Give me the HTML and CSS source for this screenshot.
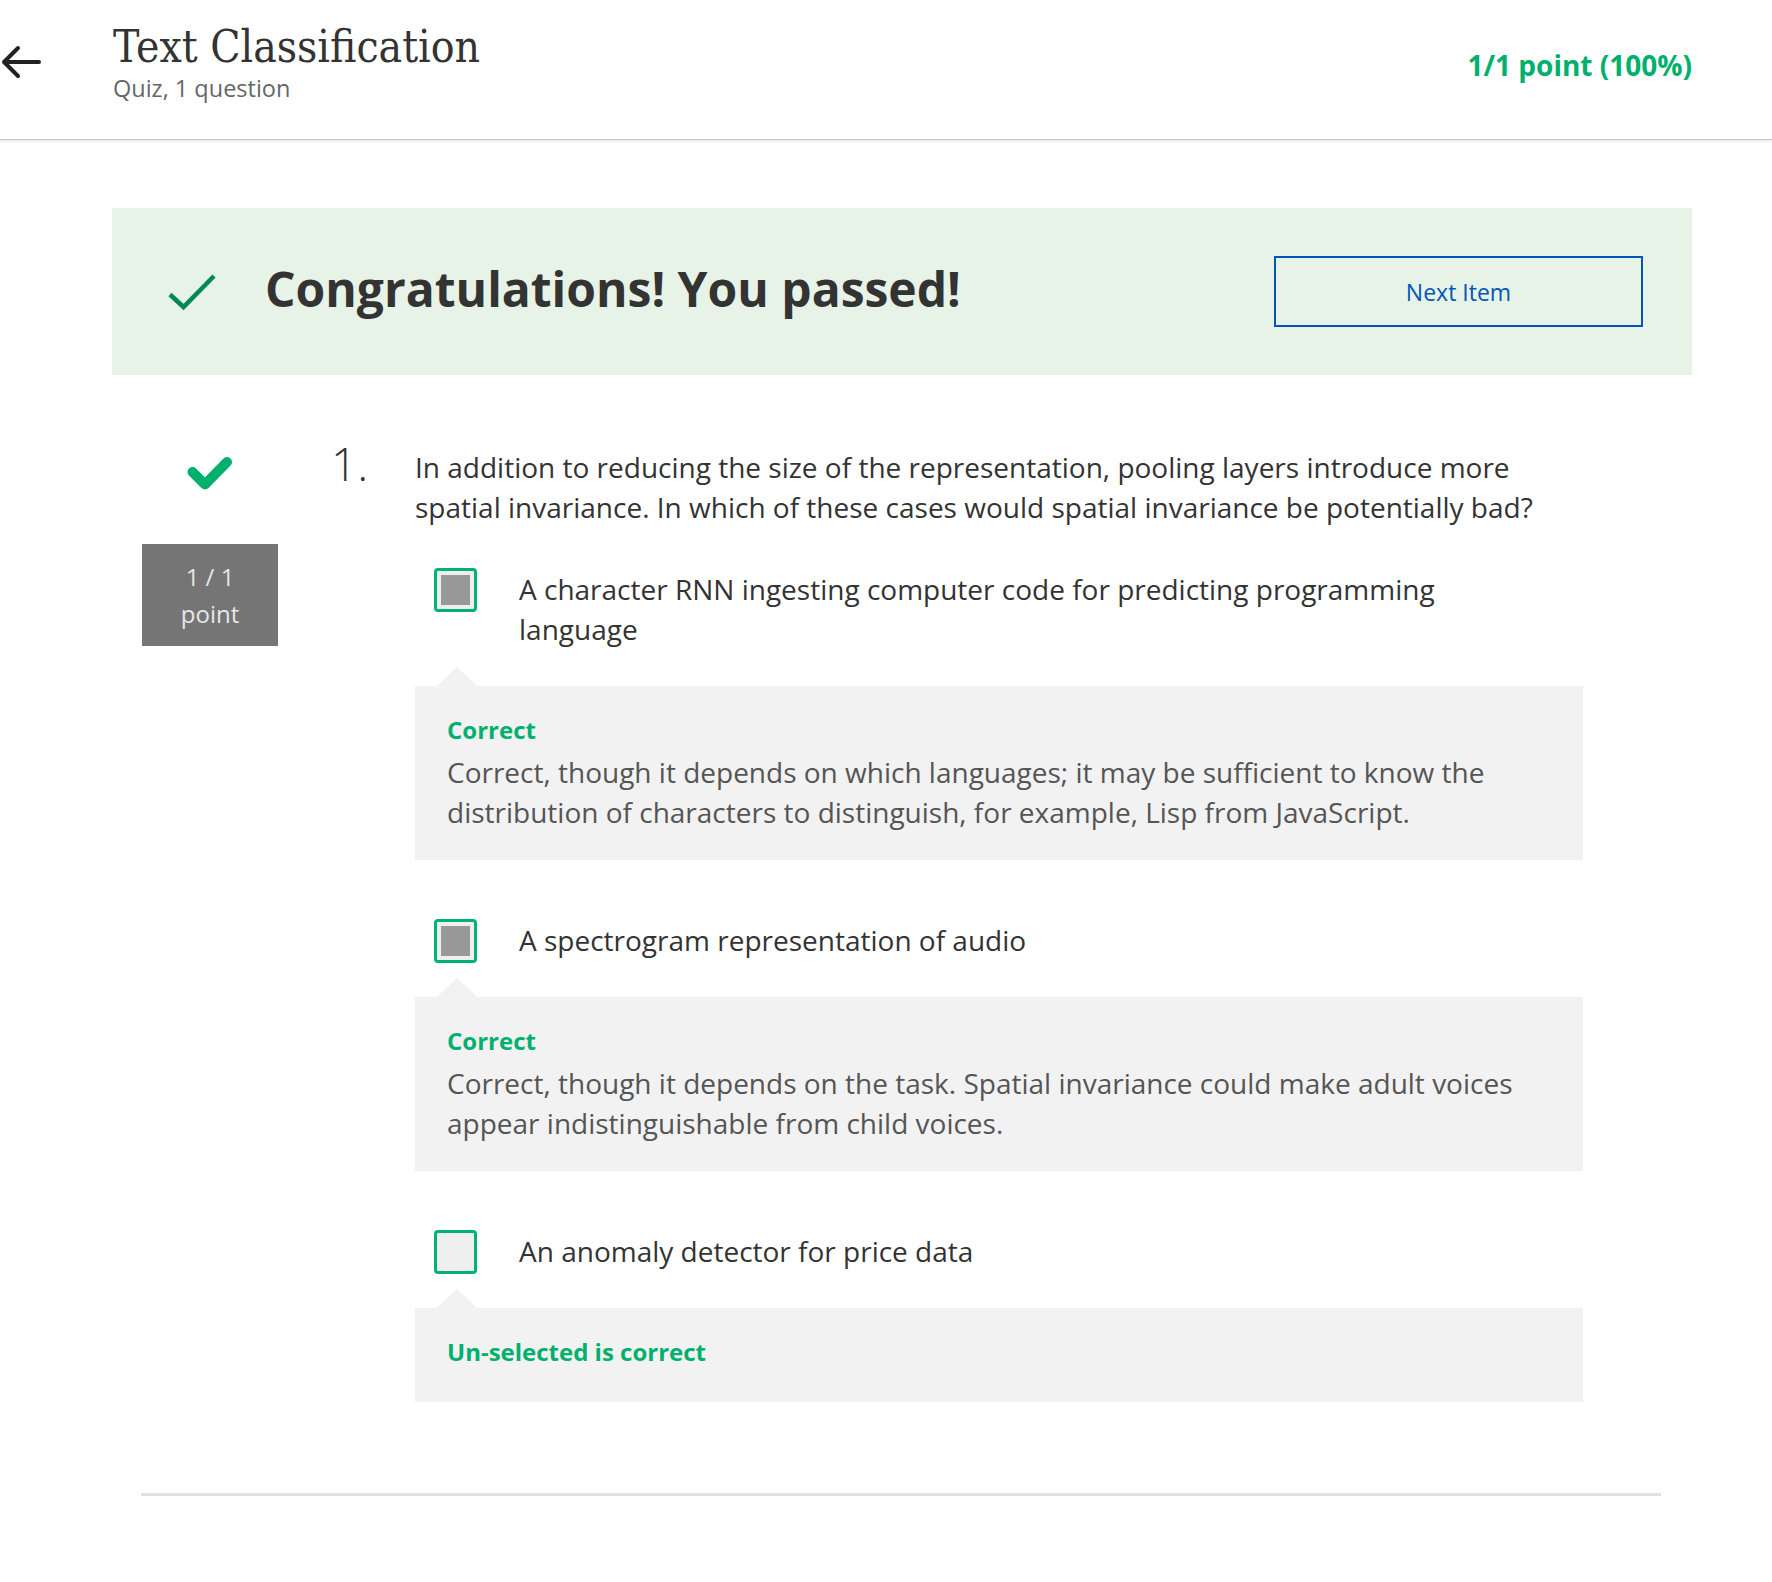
FILE: index.html
```html
<!DOCTYPE html>
<html lang="en">
<head>
<meta charset="utf-8">
<title>Text Classification</title>
<link rel="stylesheet" href="styles.css">
</head>
<body>
<header class="topbar">
  <a class="back" href="#" aria-label="Back">
    <svg width="42" height="38" viewBox="0 0 42 38"><path d="M39 19 H4 M18 5 L4 19 L18 33" fill="none" stroke="#222" stroke-width="4" stroke-linecap="round" stroke-linejoin="round"/></svg>
  </a>
  <div class="titles">
    <h1 class="title">Text Classification</h1>
    <div class="subtitle">Quiz, 1 question</div>
  </div>
  <div class="score">1/1 point (100%)</div>
</header>
<main class="page">
  <section class="banner">
    <svg class="banner-check" width="48" height="38" viewBox="0 0 48 38"><polyline points="2,21.5 15.5,34 46,3" fill="none" stroke="#00875a" stroke-width="4.5"/></svg>
    <h2 class="banner-text">Congratulations! You passed!</h2>
    <button class="next-btn" type="button">Next Item</button>
  </section>

  <section class="question">
    <div class="q-side">
      <svg class="q-check" width="46" height="38" viewBox="0 0 46 38"><polyline points="5.5,17 18,29.5 40,7" fill="none" stroke="#00b06c" stroke-width="10" stroke-linecap="round" stroke-linejoin="round"/></svg>
      <div class="q-points">1 / 1<br>point</div>
    </div>
    <div class="q-num">1.</div>
    <div class="q-body">
      <p class="q-text">In addition to reducing the size of the representation, pooling layers introduce more spatial invariance. In which of these cases would spatial invariance be potentially bad?</p>

      <div class="option">
        <span class="checkbox checked"></span>
        <span class="option-text">A character RNN ingesting computer code for predicting programming language</span>
      </div>
      <div class="feedback">
        <div class="fb-label">Correct</div>
        <div class="fb-text">Correct, though it depends on which languages; it may be sufficient to know the distribution of characters to distinguish, for example, Lisp from JavaScript.</div>
      </div>

      <div class="option">
        <span class="checkbox checked"></span>
        <span class="option-text">A spectrogram representation of audio</span>
      </div>
      <div class="feedback">
        <div class="fb-label">Correct</div>
        <div class="fb-text">Correct, though it depends on the task. Spatial invariance could make adult voices appear indistinguishable from child voices.</div>
      </div>

      <div class="option">
        <span class="checkbox"></span>
        <span class="option-text">An anomaly detector for price data</span>
      </div>
      <div class="feedback">
        <div class="fb-label">Un-selected is correct</div>
      </div>
    </div>
  </section>
  <div class="bottom-rule"></div>
</main>
</body>
</html>
```

FILE: styles.css
```css
body {
  margin: 0;
  font-family: "Open Sans", "Noto Sans", sans-serif;
  color: #333;
  background: #fff;
}

.topbar {
  display: flex;
  align-items: flex-start;
  height: 139px;
  border-bottom: 1px solid #c6c6c6;
  box-shadow: 0 1px 3px rgba(0, 0, 0, 0.12);
}

.back {
  display: block;
  width: 42px;
  height: 38px;
  margin-top: 43px;
}

.back svg {
  display: block;
}

.titles {
  flex: 1;
  margin-left: 71px;
}

.title {
  margin: 20px 0 0;
  font-family: "DejaVu Serif", serif;
  font-stretch: condensed;
  font-weight: 400;
  font-size: 44px;
  line-height: 53px;
  color: #333;
}

.subtitle {
  margin-top: 0;
  font-size: 23.5px;
  line-height: 30px;
  color: #666;
}

.score {
  margin: 47px 80px 0 0;
  font-weight: 700;
  font-size: 28px;
  line-height: 36px;
  color: #00b06c;
}

.page {
  width: 1580px;
  margin-left: 112px;
}

.banner {
  display: flex;
  align-items: center;
  height: 167px;
  box-sizing: border-box;
  margin-top: 68px;
  padding: 0 49px 0 56px;
  background: #e7f3e7;
}

.banner-check {
  flex: none;
  display: block;
}

.banner-text {
  flex: 1;
  margin: 0 0 5px 49px;
  font-size: 48px;
  font-weight: 700;
  line-height: 1.2;
  color: #333;
}

.next-btn {
  flex: none;
  width: 369px;
  height: 71px;
  border: 2px solid #0056b8;
  background: transparent;
  color: #0056b8;
  font-family: "Open Sans", sans-serif;
  font-size: 23px;
  padding: 0;
}

.question {
  display: flex;
  align-items: flex-start;
  margin-top: 72px;
}

.q-side {
  flex: none;
  width: 136px;
  margin-left: 30px;
  display: flex;
  flex-direction: column;
  align-items: center;
}

.q-check {
  display: block;
  margin-top: 8px;
}

.q-points {
  width: 136px;
  box-sizing: border-box;
  margin-top: 51px;
  padding: 14px 0;
  background: #757575;
  color: #e6e6e6;
  font-size: 24px;
  line-height: 37px;
  text-align: center;
}

.q-num {
  flex: none;
  width: 84px;
  margin: -4px 0 0 53px;
  font-size: 46px;
  font-weight: 300;
  line-height: 40px;
  color: #333;
}

.q-body {
  flex: none;
  width: 1168px;
}

.q-text {
  margin: 0;
  font-size: 28px;
  line-height: 40px;
}

.option {
  display: flex;
  align-items: flex-start;
  margin-top: 42px;
  padding: 0 80px 0 19px;
}

.feedback + .option {
  margin-top: 60px;
}

.checkbox {
  flex: none;
  width: 43px;
  height: 44px;
  box-sizing: border-box;
  margin: -1px 0 -3px;
  padding: 4px;
  border: 3px solid #00b373;
  border-radius: 4px;
  background: #efefef;
}

.checkbox.checked::after {
  content: "";
  display: block;
  width: 100%;
  height: 100%;
  background: #999;
}

.option-text {
  margin-left: 42px;
  font-size: 28px;
  line-height: 40px;
}

.feedback {
  position: relative;
  margin-top: 37px;
  padding: 24px 32px 28px;
  background: #f2f2f2;
}

.feedback::before {
  content: "";
  position: absolute;
  top: -19px;
  left: 22px;
  border-left: 20px solid transparent;
  border-right: 20px solid transparent;
  border-bottom: 19px solid #f2f2f2;
}

.fb-label {
  font-weight: 700;
  font-size: 24px;
  line-height: 40px;
  color: #00b06c;
}

.fb-label:last-child {
  margin-bottom: 2px;
}

.fb-text {
  margin-top: 2px;
  font-size: 28px;
  line-height: 40px;
  color: #555;
}

.bottom-rule {
  height: 3px;
  width: 1520px;
  margin: 91px 0 0 29px;
  background: #e0e0e0;
}
```
